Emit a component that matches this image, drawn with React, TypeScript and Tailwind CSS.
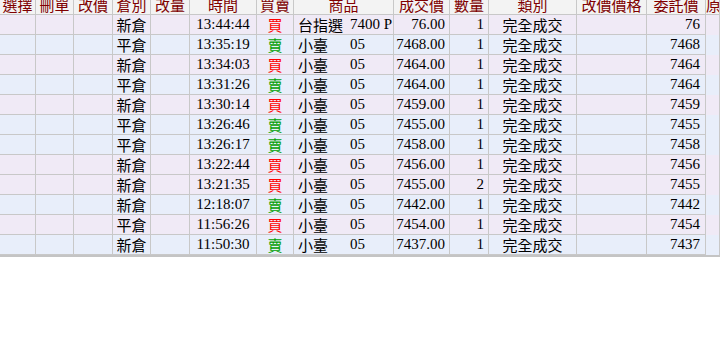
import React from 'react'

type Fill = {
  pos: string
  time: string
  side: '買' | '賣'
  name: string
  code: string
  price: string
  qty: number
  kind: string
  order: string
}

const rows: Fill[] = [
  { pos: '新倉', time: '13:44:44', side: '買', name: '台指選', code: '7400 P', price: '76.00', qty: 1, kind: '完全成交', order: '76' },
  { pos: '平倉', time: '13:35:19', side: '賣', name: '小臺', code: '05', price: '7468.00', qty: 1, kind: '完全成交', order: '7468' },
  { pos: '新倉', time: '13:34:03', side: '買', name: '小臺', code: '05', price: '7464.00', qty: 1, kind: '完全成交', order: '7464' },
  { pos: '平倉', time: '13:31:26', side: '賣', name: '小臺', code: '05', price: '7464.00', qty: 1, kind: '完全成交', order: '7464' },
  { pos: '新倉', time: '13:30:14', side: '買', name: '小臺', code: '05', price: '7459.00', qty: 1, kind: '完全成交', order: '7459' },
  { pos: '平倉', time: '13:26:46', side: '賣', name: '小臺', code: '05', price: '7455.00', qty: 1, kind: '完全成交', order: '7455' },
  { pos: '平倉', time: '13:26:17', side: '賣', name: '小臺', code: '05', price: '7458.00', qty: 1, kind: '完全成交', order: '7458' },
  { pos: '新倉', time: '13:22:44', side: '買', name: '小臺', code: '05', price: '7456.00', qty: 1, kind: '完全成交', order: '7456' },
  { pos: '新倉', time: '13:21:35', side: '買', name: '小臺', code: '05', price: '7455.00', qty: 2, kind: '完全成交', order: '7455' },
  { pos: '新倉', time: '12:18:07', side: '賣', name: '小臺', code: '05', price: '7442.00', qty: 1, kind: '完全成交', order: '7442' },
  { pos: '平倉', time: '11:56:26', side: '買', name: '小臺', code: '05', price: '7454.00', qty: 1, kind: '完全成交', order: '7454' },
  { pos: '新倉', time: '11:50:30', side: '賣', name: '小臺', code: '05', price: '7437.00', qty: 1, kind: '完全成交', order: '7437' },
]

const headers = ['選擇', '刪單', '改價', '倉別', '改量', '時間', '買賣', '商品', '成交價', '數量', '類別', '改價價格', '委託價', '原']

const cols = 'grid grid-cols-[36px_38px_39px_38px_39px_67px_37px_100px_56px_39px_88px_70px_59px_1fr]'
const cjk = "font-['Noto_Sans_CJK_TC','Noto_Sans_CJK_SC',sans-serif] text-[15px]"
const num = "font-['Liberation_Serif',serif] text-[15px]"
const cell = 'h-[20px] border-r border-b border-[#c8c8c8] overflow-hidden whitespace-nowrap leading-[19px]'

export default function App() {
  return (
    <div className="w-[720px] h-[348px] bg-white overflow-hidden text-black">
      <div className={cols}>
        {headers.map((h) => (
          <div
            key={h}
            className={`h-[15px] bg-[#f3f3f3] border-r border-b border-[#c8c8c8] overflow-hidden whitespace-nowrap text-center text-[#800000] ${cjk}`}
          >
            <div className="-mt-[4px] leading-[18px]">{h}</div>
          </div>
        ))}
      </div>

      <div className="border-b-2 border-[#c4c4c4]">
        {rows.map((r, i) => {
          const bg = r.side === '買' ? 'bg-[#f0eaf6]' : 'bg-[#e8eefa]'
          return (
            <div key={i} className={`${cols} ${bg}`}>
              <div className={cell} />
              <div className={cell} />
              <div className={cell} />
              <div className={`${cell} ${cjk} text-center`}>{r.pos}</div>
              <div className={cell} />
              <div className={`${cell} ${num} text-center`}>{r.time}</div>
              <div
                className={`${cell} ${cjk} text-center ${r.side === '買' ? 'text-[#ff0000]' : 'text-[#00a000]'}`}
              >
                {r.side}
              </div>
              <div className={`${cell} pl-[4px] flex items-center`}>
                <span className={`${cjk} inline-block w-[52px]`}>{r.name}</span>
                <span className={num}>{r.code}</span>
              </div>
              <div className={`${cell} ${num} text-right pr-[4px]`}>{r.price}</div>
              <div className={`${cell} ${num} text-right pr-[4px]`}>{r.qty}</div>
              <div className={`${cell} ${cjk} text-center`}>{r.kind}</div>
              <div className={cell} />
              <div className={`${cell} ${num} text-right pr-[5px]`}>{r.order}</div>
              <div className={`${cell} border-b-0`} />
            </div>
          )
        })}
      </div>
    </div>
  )
}
